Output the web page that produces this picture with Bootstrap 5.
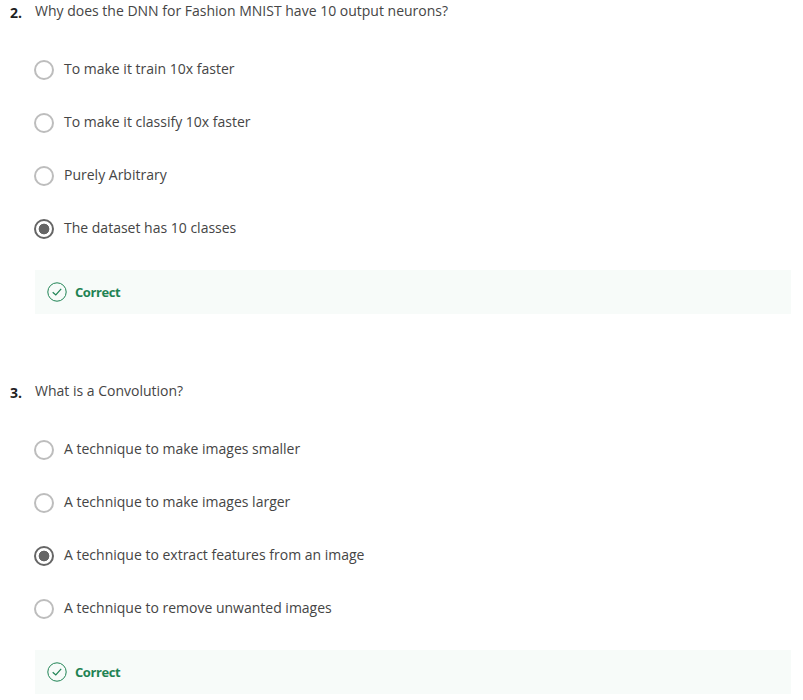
<!DOCTYPE html>
<html lang="en"><head><meta charset="utf-8"><title>Quiz</title>
<meta name="viewport" content="width=device-width, initial-scale=1">
<link href="https://cdn.jsdelivr.net/npm/bootstrap@5.3.0/dist/css/bootstrap.min.css" rel="stylesheet">
<style>
body{font-family:"Open Sans",sans-serif;font-size:14px;line-height:22px;color:#454545;background:#fff}
.question{height:380px;padding:0 12px 0 10px}
.question:last-child{height:320px}
.q-num{width:25px;font-weight:700;color:#1f1f1f;padding-top:2px;flex:none}
.q-options{padding-top:36px}
.q-option{height:22px;margin-bottom:31px}
.q-option .form-check-input{width:20px;height:20px;margin:2px 10px 0 -1px;border:2px solid #bdbdbd;flex:none}
.q-option .form-check-input:checked{border-color:#666;background:radial-gradient(circle,#666 0 5px,transparent 5.7px)}
.q-result{height:44px;padding-left:12px;background:#f7fbf9;color:#1f8354;font-size:13px;font-weight:700;letter-spacing:-.43px}
</style></head><body>
<main>
<section class="question d-flex">
<div class="q-num">2.</div>
<div class="flex-grow-1"><div>Why does the DNN for Fashion MNIST have 10 output neurons?</div>
<div class="q-options">
<label class="q-option d-flex"><input class="form-check-input" type="radio" name="q2"><span>To make it train 10x faster</span></label>
<label class="q-option d-flex"><input class="form-check-input" type="radio" name="q2"><span>To make it classify 10x faster</span></label>
<label class="q-option d-flex"><input class="form-check-input" type="radio" name="q2"><span>Purely Arbitrary</span></label>
<label class="q-option d-flex"><input class="form-check-input" type="radio" name="q2" checked><span>The dataset has 10 classes</span></label>
</div>
<div class="q-result d-flex align-items-center gap-2"><svg width="20" height="20" viewBox="0 0 20 20" fill="none" stroke="currentColor"><circle cx="10" cy="10" r="9.2"/><path stroke-width="1.2" d="M5.7 10.2 8.8 13 14.2 6.8"/></svg><span>Correct</span></div>
</div></section>
<section class="question d-flex">
<div class="q-num">3.</div>
<div class="flex-grow-1"><div>What is a Convolution?</div>
<div class="q-options">
<label class="q-option d-flex"><input class="form-check-input" type="radio" name="q3"><span>A technique to make images smaller</span></label>
<label class="q-option d-flex"><input class="form-check-input" type="radio" name="q3"><span>A technique to make images larger</span></label>
<label class="q-option d-flex"><input class="form-check-input" type="radio" name="q3" checked><span>A technique to extract features from an image</span></label>
<label class="q-option d-flex"><input class="form-check-input" type="radio" name="q3"><span>A technique to remove unwanted images</span></label>
</div>
<div class="q-result d-flex align-items-center gap-2"><svg width="20" height="20" viewBox="0 0 20 20" fill="none" stroke="currentColor"><circle cx="10" cy="10" r="9.2"/><path stroke-width="1.2" d="M5.7 10.2 8.8 13 14.2 6.8"/></svg><span>Correct</span></div>
</div></section>
</main>
<script src="https://cdn.jsdelivr.net/npm/bootstrap@5.3.0/dist/js/bootstrap.bundle.min.js"></script>
</body></html>
